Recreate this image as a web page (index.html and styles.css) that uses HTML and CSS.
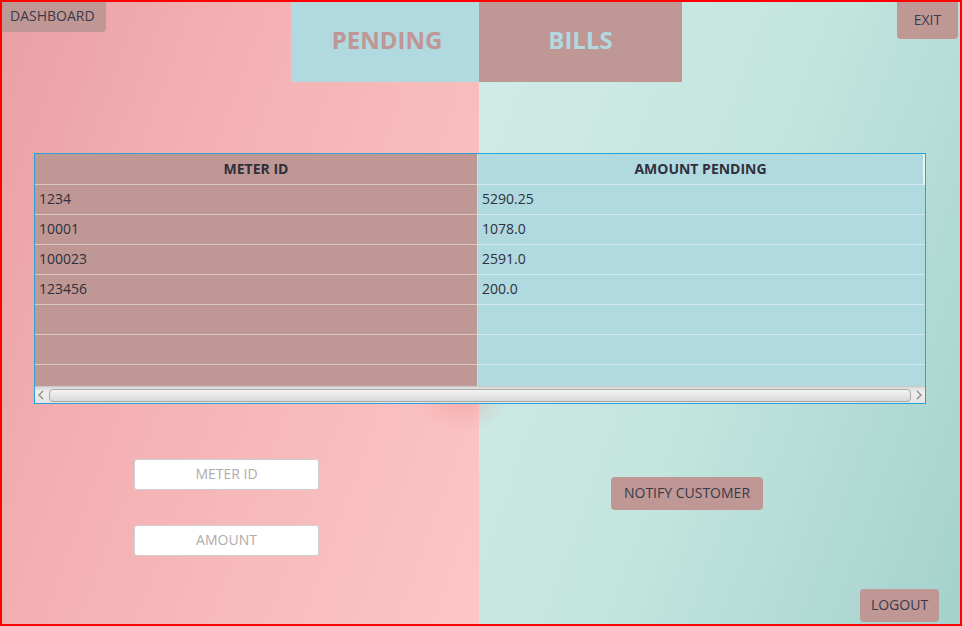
FILE: index.html
```html
<!DOCTYPE html>
<html>
<head>
<meta charset="utf-8">
<link rel="stylesheet" href="styles.css">
</head>
<body>
<div class="frame">
  <div class="topbar">
    <button class="btn dash">DASHBOARD</button>
    <div class="title">
      <div class="t-pending">PENDING</div>
      <div class="t-bills">BILLS</div>
    </div>
    <button class="btn exit">EXIT</button>
  </div>

  <div class="table">
    <div class="cols">
      <div class="col col-left">
        <div class="cell head">METER ID</div>
        <div class="cell">1234</div>
        <div class="cell">10001</div>
        <div class="cell">100023</div>
        <div class="cell">123456</div>
        <div class="cell"></div>
        <div class="cell"></div>
        <div class="cell last"></div>
      </div>
      <div class="col col-right">
        <div class="cell head">AMOUNT PENDING</div>
        <div class="cell">5290.25</div>
        <div class="cell">1078.0</div>
        <div class="cell">2591.0</div>
        <div class="cell">200.0</div>
        <div class="cell"></div>
        <div class="cell"></div>
        <div class="cell last"></div>
      </div>
    </div>
    <div class="hscroll">
      <svg class="arrow" width="8" height="10" viewBox="0 0 8 10"><path d="M6 1 L2 5 L6 9" fill="none" stroke="#888" stroke-width="1.2"/></svg>
      <div class="thumb"></div>
      <svg class="arrow" width="8" height="10" viewBox="0 0 8 10"><path d="M2 1 L6 5 L2 9" fill="none" stroke="#888" stroke-width="1.2"/></svg>
    </div>
  </div>

  <div class="bottom">
    <div class="left-pane">
      <input class="field" placeholder="METER ID">
      <input class="field" placeholder="AMOUNT">
    </div>
    <div class="right-pane">
      <button class="btn notify">NOTIFY CUSTOMER</button>
      <button class="btn logout">LOGOUT</button>
    </div>
  </div>
</div>
</body>
</html>
```
FILE: styles.css
```css
* { box-sizing: border-box; }
html, body { margin: 0; padding: 0; }
body {
  width: 962px;
  height: 626px;
  overflow: hidden;
  font-family: "Open Sans", "Noto Sans", sans-serif;
}
.frame {
  width: 962px;
  height: 626px;
  border: 2px solid #ff0000;
  display: flex;
  flex-direction: column;
  background-color: #cfeae5;
  background-image:
    radial-gradient(ellipse 45px 30px at 460px 400px, rgba(232,140,140,0.35), rgba(232,140,140,0) 100%),
    linear-gradient(110deg, #e8a0a4 0%, #f3b0b2 35%, #fdc6c6 100%),
    linear-gradient(110deg, #d2ebe6 0%, #c3e5de 50%, #a4d2cb 100%);
  background-size: 100% 100%, 477px 100%, 481px 100%;
  background-position: 0 0, 0 0, 477px 0;
  background-repeat: no-repeat;
}
.btn {
  font-family: "Open Sans", "Noto Sans", sans-serif;
  font-size: 14px;
  color: #3a3a48;
  background: #bf9795;
  border: none;
  padding: 0;
  margin: 0;
  border-radius: 4px;
}
.topbar {
  display: flex;
  align-items: flex-start;
  height: 80px;
  flex: none;
}
.dash {
  width: 104px;
  height: 30px;
  border-radius: 0 0 4px 0;
  text-align: left;
  padding-left: 8px;
  padding-bottom: 4px;
}
.title {
  display: flex;
  margin-left: 185px;
  height: 80px;
}
.t-pending, .t-bills {
  display: flex;
  align-items: center;
  justify-content: center;
  font-weight: bold;
  font-size: 24px;
  padding-bottom: 6px;
}
.t-pending { width: 188px; background: #b0dae0; color: #c09595; padding-left: 4px; }
.t-bills { width: 203px; background: #bf9795; color: #b0dae0; }
.exit {
  width: 61px;
  height: 37px;
  margin-left: 215px;
  border-radius: 0 0 4px 4px;
  padding-bottom: 3px;
}

.table {
  margin-top: 71px;
  margin-left: 32px;
  width: 892px;
  height: 251px;
  border: 1px solid #29a2d8;
  display: flex;
  flex-direction: column;
  flex: none;
}
.cols {
  display: flex;
  height: 232px;
  flex: none;
}
.col { display: flex; flex-direction: column; }
.col-left {
  width: 443px;
  background: #bf9795;
  border-right: 1px solid #e6d4d4;
}
.col-right {
  flex: 1;
  background: #b0dae0;
}
.cell {
  height: 30px;
  flex: none;
  border-bottom: 1px solid rgba(255,255,255,0.45);
  font-size: 14px;
  color: #30303c;
  padding-left: 4px;
  line-height: 27px;
}
.cell.last { height: 21px; border-bottom: none; }
.cell.head {
  height: 31px;
  font-weight: bold;
  text-align: center;
  padding-left: 0;
  line-height: 30px;
}
.col-right .cell.head { border-right: 2px solid rgba(255,255,255,0.7); }
.hscroll {
  flex: 1;
  display: flex;
  align-items: center;
  gap: 4px;
  padding: 0 2px;
  background: linear-gradient(#d8d8d8, #eeeeee 30%, #e4e4e4);
  border-top: 1px solid #c8c8c8;
}
.arrow { flex: none; }
.thumb {
  flex: 1;
  height: 13px;
  border: 1px solid #a9a9a9;
  border-radius: 4px;
  background: linear-gradient(#f4f4f4, #e4e4e4 60%, #d8d8d8);
}

.bottom {
  flex: 1;
  display: flex;
}
.left-pane {
  width: 477px;
  padding-left: 132px;
  padding-top: 55px;
  display: flex;
  flex-direction: column;
  gap: 35px;
}
.field {
  width: 185px;
  height: 31px;
  border: 1px solid #cfcfcf;
  border-radius: 3px;
  background: #ffffff;
  font-family: "Open Sans", "Noto Sans", sans-serif;
  font-size: 14px;
  text-align: center;
  outline: none;
  padding: 0 0 2px 0;
}
.field::placeholder { color: #b0aaaa; }
.right-pane {
  flex: 1;
  display: flex;
  flex-direction: column;
  align-items: flex-start;
}
.notify {
  margin-top: 73px;
  margin-left: 132px;
  width: 152px;
  height: 33px;
  padding-bottom: 2px;
}
.logout {
  margin-top: auto;
  margin-bottom: 2px;
  align-self: flex-end;
  margin-right: 21px;
  width: 79px;
  height: 33px;
  padding-bottom: 2px;
}
```
